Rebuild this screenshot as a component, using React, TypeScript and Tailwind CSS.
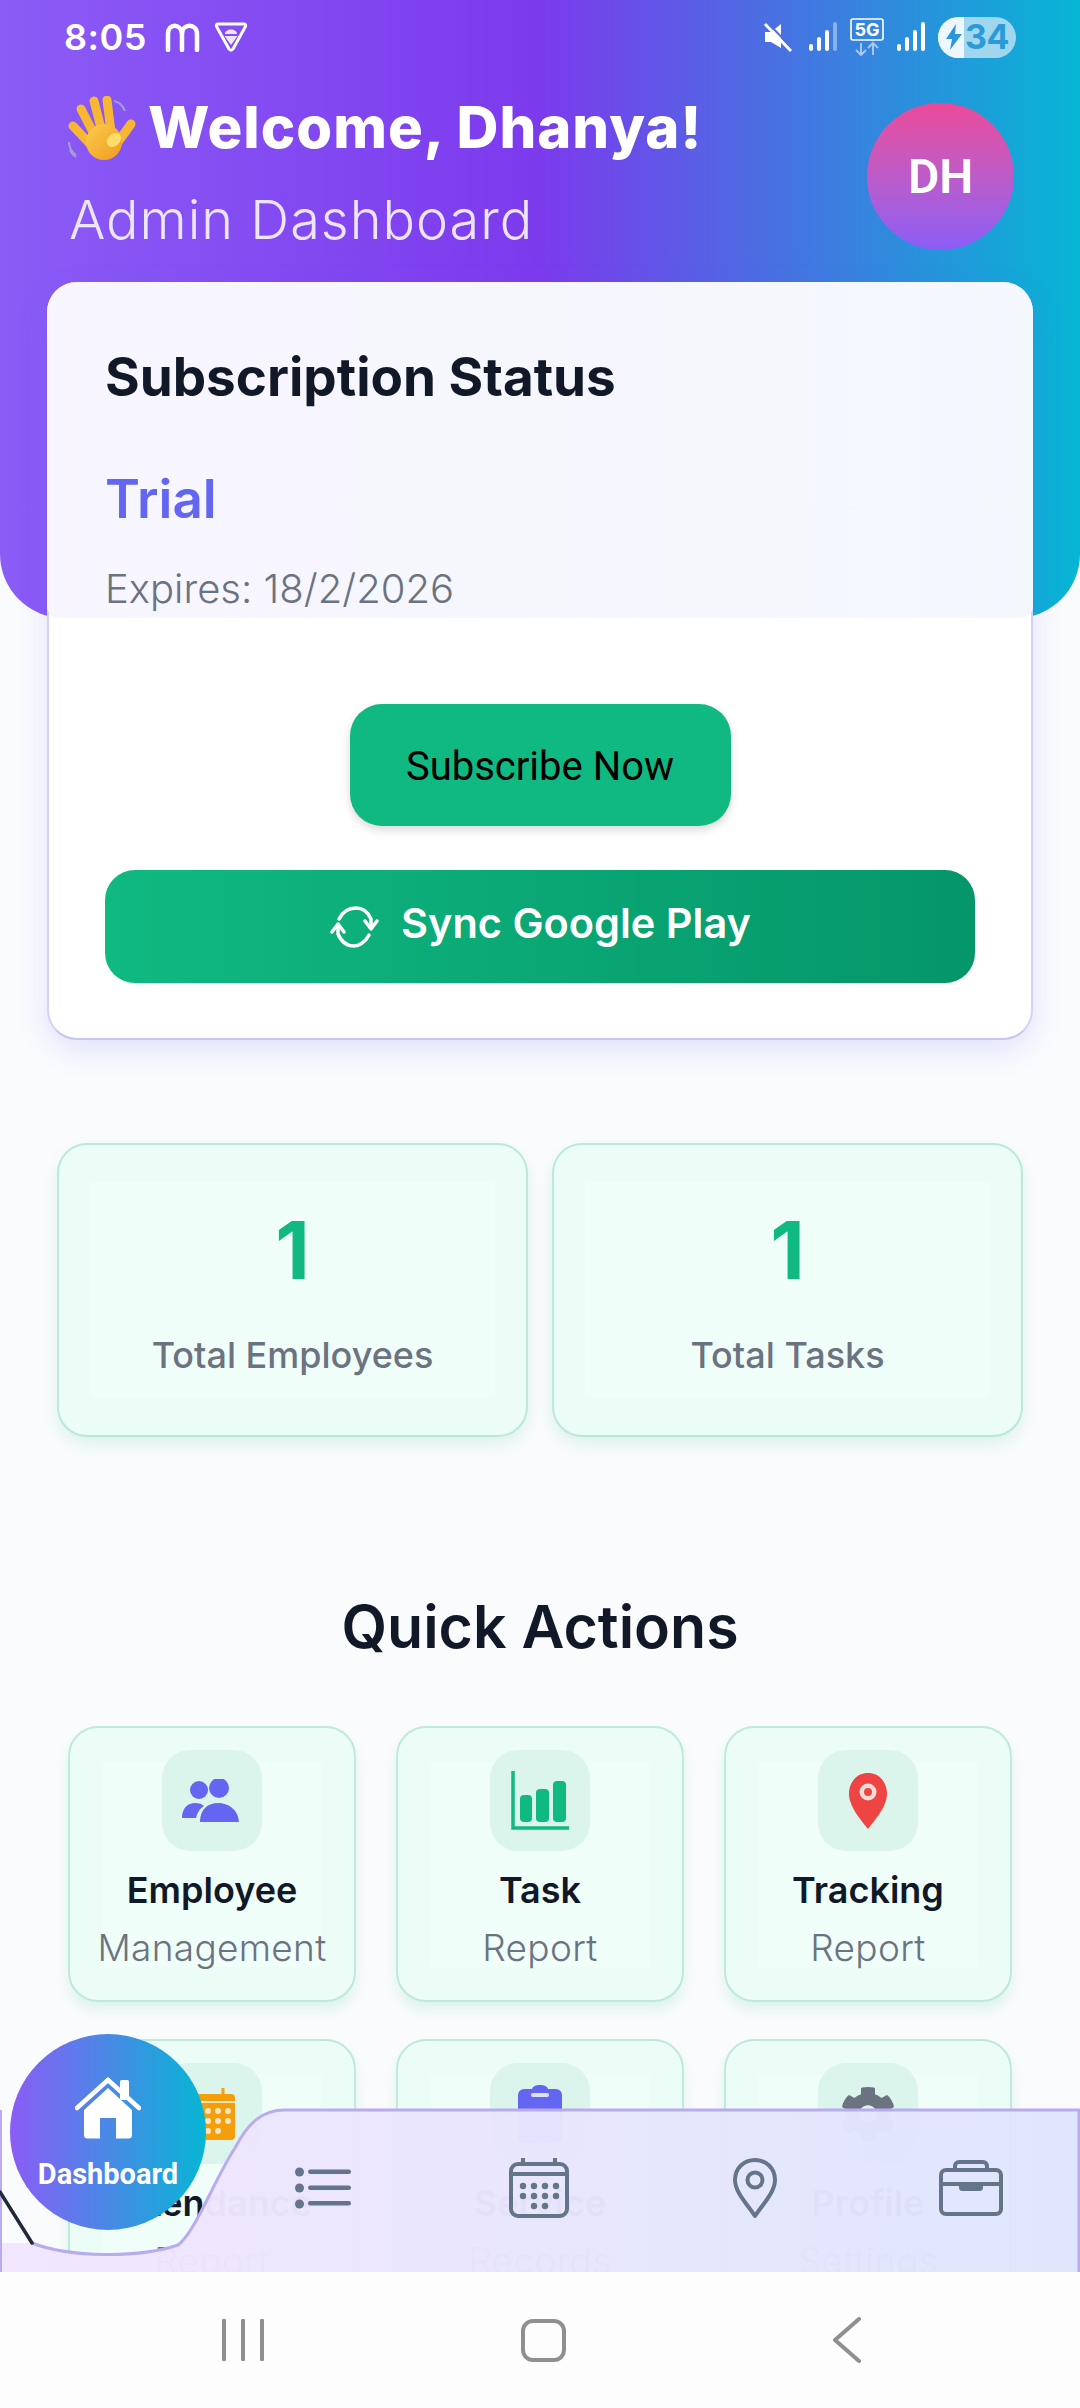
import React from "react";
import { FaCog } from "react-icons/fa";

const Wave = () => (
  <svg width="68" height="66" viewBox="0 0 68 66" className="shrink-0">
    <defs>
      <linearGradient id="h" x1="0" y1="0" x2="1" y2="1">
        <stop offset="0" stopColor="#fbcb50" />
        <stop offset="1" stopColor="#f09c1c" />
      </linearGradient>
    </defs>
    <path d="M46 5c5 1 9 5 11 10M1 46c0 5 3 10 7 13M2 54c1 3 3 5 6 7" fill="none" stroke="#a59bdc" strokeWidth="2" />
    <g fill="none" stroke="#f7b733" strokeWidth="9" strokeLinecap="round">
      <path d="M5 30L22 48" />
      <path d="M13 13L27 40" />
      <path d="M26 5L34 36" />
      <path d="M39 4L43 36" />
      <path d="M63 28L50 46" />
    </g>
    <circle cx="36" cy="46" r="18" fill="url(#h)" />
    <ellipse cx="46" cy="44" rx="8" ry="6" fill="#fddc6c" transform="rotate(-40 46 44)" />
  </svg>
);

const Signal = ({ dim }: { dim?: boolean }) => (
  <svg width="28" height="30" viewBox="0 0 28 30">
    <g fill="#fff">
      <rect x="0" y="22" width="4" height="7" rx="2" />
      <rect x="8" y="15" width="4" height="14" rx="2" />
      <rect x="16" y="8" width="4" height="21" rx="2" />
      <rect x="24" y="0" width="4" height="29" rx="2" opacity={dim ? 0.4 : 1} />
    </g>
  </svg>
);

const StatusBar = () => (
  <div className="flex h-[70px] items-center justify-between pl-[64px] pr-[64px] pt-[4px] text-white">
    <div className="flex items-center">
      <span className="text-[36px] leading-[46px] font-semibold tracking-[0.5px]">8:05</span>
      <svg width="36" height="30" viewBox="0 0 36 30" className="ml-[18px]">
        <path d="M3 28V12c0-11 13-11 14 0v16M17 12c0-11 15-11 15 0v16" fill="none" stroke="#fff" strokeWidth="4.5" strokeLinecap="round" />
      </svg>
      <svg width="34" height="32" viewBox="0 0 34 32" className="ml-[13px]">
        <path d="M4 3h26c1.500 0 2 1 1.500 2.500L19 28c-1 1.500-3 1.500-4 0L2.500 5.500C2 4 2.500 3 4 3z" fill="none" stroke="#fff" strokeWidth="3" />
        <path d="M11 13c0-6 12-6 12 0zM10.500 15h13l-6.500 9z" fill="#fff" opacity=".85" />
      </svg>
    </div>
    <div className="flex items-center">
      <svg width="30" height="30" viewBox="0 0 30 30">
        <path d="M2 10h6l10-8v24l-10-6H2z" fill="#fff" />
        <path d="M2 2l26 27" stroke="#fff" strokeWidth="3" />
        <path d="M4 0l26 27" stroke="#4f6fe0" strokeWidth="2" />
      </svg>
      <div className="ml-[16px]"><Signal dim /></div>
      <svg width="34" height="38" viewBox="0 0 34 38" className="ml-[13px]">
        <rect x="1" y="1" width="32" height="21" rx="2" fill="none" stroke="#fff" strokeWidth="1.600" />
        <text x="17" y="18" textAnchor="middle" fontSize="18" fontWeight="700" fill="#fff" fontFamily="Inter, sans-serif">5G</text>
        <path d="M11 25v12m-5-5l5 5 5-5M23 37V25m-5 5l5-5 5 5" fill="none" stroke="#a9c6f2" strokeWidth="2" />
      </svg>
      <div className="ml-[13px]"><Signal /></div>
      <div className="relative ml-[13px] flex h-[41px] w-[78px] items-center overflow-hidden rounded-full bg-[#a0d7ef]">
        <div className="flex h-full w-[26px] items-center justify-center bg-[#eef7fd] pl-[6px]">
          <svg width="16" height="26" viewBox="0 0 16 26"><path d="M10 0L0 15h6L4 26l12-16H9z" fill="#2a97d8" /></svg>
        </div>
        <span className="ml-[1px] text-[34px] leading-none font-bold tracking-[-0.5px] text-[#2a9ad8]">34</span>
      </div>
    </div>
  </div>
);

const Header = () => (
  <div className="h-[618px] rounded-b-[64px] bg-[linear-gradient(90deg,#8b5cf6,#7c3aed_50%,#06b6d4)]">
    <StatusBar />
    <div className="flex items-start justify-between pl-[68px] pr-[66px] pt-[24px]">
      <div>
        <div className="flex h-[70px] items-center">
          <Wave />
          <span className="ml-[12px] -mt-[5px] text-[58px] leading-[70px] font-extrabold tracking-[1px] whitespace-nowrap text-white">Welcome, Dhanya!</span>
        </div>
        <div className="mt-[26px] ml-[1px] text-[54px] leading-[60px] font-light tracking-[1px] text-[#ede4fe]">Admin Dashboard</div>
      </div>
      <div className="mt-[9px] flex h-[147px] w-[147px] shrink-0 items-center justify-center rounded-full bg-gradient-to-b from-[#ec4899] to-[#8b5cf6] text-[48px] font-semibold text-white" style={{ fontFamily: "Roboto, sans-serif" }}>
        DH
      </div>
    </div>
  </div>
);

const SubCard = () => (
  <div className="relative mx-[47px] -mt-[336px] h-[758px] rounded-[30px] border-2 border-[#d3d3f9] border-b-[#c6c6f3] bg-white px-[56px] pt-[63px] shadow-[0_10px_30px_rgba(99,102,241,0.16)]">
    <div className="absolute -left-[2px] -right-[2px] -top-[2px] h-[336px] rounded-t-[30px] rounded-b-[12px] bg-gradient-to-r from-[#f8f5fe] to-[#f4f8fd]" />
    <div className="relative">
      <div className="text-[53px] leading-[60px] font-bold text-[#111827]">Subscription Status</div>
      <div className="mt-[62px] text-[53px] leading-[60px] font-semibold text-[#6366f1]">Trial</div>
      <div className="mt-[35px] text-[40px] leading-[50px] font-light text-[#6b7280]">Expires: 18/2/2026</div>
      <div className="mt-[90px] flex justify-center">
        <div className="flex h-[122px] w-[381px] items-center justify-center rounded-[32px] bg-[#10b981] pt-[3px] text-[40px] text-black shadow-[0_4px_10px_rgba(0,0,0,0.15)]" style={{ fontFamily: "Roboto, sans-serif" }}>
          Subscribe Now
        </div>
      </div>
      <div className="mt-[44px] flex h-[113px] items-center justify-center rounded-[30px] bg-gradient-to-r from-[#10b981] to-[#059669] pb-[8px]">
        <svg width="50" height="42" viewBox="0 0 50 42" fill="none" stroke="#fff" strokeWidth="3.500" strokeLinecap="round" strokeLinejoin="round" className="mt-[8px]">
          <path d="M10 13C14 5 21 2 27 2c7 0 12 4 15 11v8" />
          <path d="M40 29c-4 8-11 11-15 11-8 0-13-5-16-12v-8" />
          <path d="M3 27l6-8 6 8" transform="translate(0 -1)" />
          <path d="M36 15l6 8 6-8" />
        </svg>
        <span className="ml-[22px] text-[41.5px] leading-[50px] font-semibold text-white">Sync Google Play</span>
      </div>
    </div>
  </div>
);

const Stat = ({ label }: { label: string }) => (
  <div className="flex h-[294px] flex-col items-center rounded-[30px] border-2 border-[#b9e9da] bg-[#ecfcf6] bg-[image:linear-gradient(#f0fef9,#f0fef9)] bg-[length:405px_216px] bg-center bg-no-repeat shadow-[0_8px_16px_rgba(16,185,129,0.12)]">
    <div className="mt-[60px] text-[80px] leading-[90px] font-bold text-[#10b981]">1</div>
    <div className="mt-[38px] text-[36px] leading-[44px] font-medium text-[#6b7280]">{label}</div>
  </div>
);

const People = () => (
  <svg width="60" height="44" viewBox="0 0 60 44" fill="#6366f1">
    <ellipse cx="17" cy="11" rx="9" ry="9" />
    <ellipse cx="37" cy="9" rx="10" ry="10" />
    <path d="M0 39c0-10 6-15 13-15 4 0 7 1 9 3-5 3-7 8-8 12z" />
    <path d="M18 43c0-13 8-19 18-19s20 6 21 19z" />
  </svg>
);
const Bars = () => (
  <svg width="58" height="60" viewBox="0 0 58 60">
    <path d="M2 0v57h56" fill="none" stroke="#10b981" strokeWidth="3.500" />
    <rect x="9" y="24" width="12" height="27" rx="4" fill="#10b981" />
    <rect x="25" y="18" width="13" height="33" rx="4" fill="#10b981" />
    <rect x="42" y="10" width="13" height="41" rx="4" fill="#10b981" />
  </svg>
);
const RedPin = () => (
  <svg width="40" height="56" viewBox="0 0 40 56">
    <path d="M20 0C9 0 1 9 1 21c0 13 13 27 19 35 6-8 19-22 19-35C39 9 31 0 20 0z" fill="#ef4444" />
    <circle cx="20" cy="19" r="8.500" fill="#f5dcd8" />
    <circle cx="20" cy="19" r="4" fill="#ef4444" />
  </svg>
);
const Cal = () => (
  <svg width="46" height="52" viewBox="0 0 46 52">
    <path d="M4 6h38a4 4 0 014 4v38a4 4 0 01-4 4H4a4 4 0 01-4-4V10a4 4 0 014-4z" fill="#f59e0b" />
    <path d="M34 0v8" stroke="#f59e0b" strokeWidth="3" />
    <path d="M0 14h46" stroke="#fbe6bd" strokeWidth="2" />
    <g fill="#fbe6bd">
      <circle cx="19" cy="23" r="3" /><circle cx="29" cy="23" r="3" /><circle cx="39" cy="23" r="3" />
      <circle cx="19" cy="33" r="3" /><circle cx="29" cy="33" r="3" /><circle cx="39" cy="33" r="3" />
      <circle cx="19" cy="43" r="3" /><circle cx="29" cy="43" r="3" />
    </g>
  </svg>
);
const Clip = () => (
  <svg width="44" height="58" viewBox="0 0 44 58">
    <path d="M6 4h8c1-3 4-4 8-4s7 1 8 4h8a6 6 0 016 6v42a6 6 0 01-6 6H6a6 6 0 01-6-6V10a6 6 0 016-6z" fill="#6366f1" />
    <rect x="13" y="8" width="18" height="4" rx="2" fill="#dfe0fb" />
  </svg>
);

const Action = ({ icon, title, sub }: { icon: React.ReactNode; title: string; sub: string }) => (
  <div className="flex h-[276px] flex-col items-center rounded-[30px] border-2 border-[#bdeadb] bg-[#ecfcf6] bg-[image:linear-gradient(#f0fef9,#f0fef9)] bg-[length:220px_205px] bg-center bg-no-repeat pt-[22px] shadow-[0_8px_14px_rgba(16,185,129,0.12)]">
    <div className="flex h-[101px] w-[100px] shrink-0 items-center justify-center rounded-[28px] bg-[#dcf5ec]">{icon}</div>
    <div className="mt-[16px] whitespace-nowrap text-[36px] leading-[46px] font-semibold text-[#111827]">{title}</div>
    <div className="mt-[12px] whitespace-nowrap text-[37px] leading-[46px] font-light tracking-[0.3px] text-[#6b7280]">{sub}</div>
  </div>
);

const BottomBar = () => (
  <div className="absolute left-0 top-[2108px] h-[164px] w-[1080px]">
    <svg width="1080" height="164" viewBox="0 0 1080 164" className="absolute left-0 top-0">
      <defs>
        <linearGradient id="bar" x1="0" y1="0" x2="1" y2="0">
          <stop offset="0" stopColor="#f1e6fe" />
          <stop offset="1" stopColor="#dfe6fc" />
        </linearGradient>
      </defs>
      <path d="M0 164V135H32C70 150 140 150 178 137C195 125 215 70 235 40C248 15 262 2 285 2H1079V164Z" fill="url(#bar)" opacity=".975" />
      <path d="M32 135C70 150 140 150 178 137C195 125 215 70 235 40C248 15 262 2 285 2H1079V164" fill="none" stroke="#baaaf0" strokeWidth="3" />
      <path d="M1 2V164" stroke="#baaaf0" strokeWidth="2" />
      <path d="M0 84L32 135" stroke="#1f2937" strokeWidth="3.500" strokeLinecap="round" />
    </svg>
    <div className="relative flex pl-[215px] pt-[48px]">
      <div className="flex h-[64px] w-[216px] items-center justify-center">
        <svg width="56" height="42" viewBox="0 0 56 42" fill="#64748b">
          <circle cx="4.500" cy="5" r="4.500" /><circle cx="4.500" cy="21" r="4.500" /><circle cx="4.500" cy="37" r="4.500" />
          <rect x="13" y="2.500" width="43" height="4.500" rx="2.200" /><rect x="13" y="18.500" width="43" height="4.500" rx="2.200" /><rect x="13" y="34" width="43" height="4.500" rx="2.200" />
        </svg>
      </div>
      <div className="flex h-[64px] w-[216px] items-center justify-center">
        <svg width="60" height="60" viewBox="0 0 60 60" fill="none">
          <rect x="2" y="6" width="56" height="52" rx="7" stroke="#64748b" strokeWidth="4" />
          <path d="M2 16h56M14 0v8M46 0v8" stroke="#64748b" strokeWidth="4" />
          <g fill="#64748b">
            <circle cx="14" cy="28" r="3.200" /><circle cx="25" cy="28" r="3.200" /><circle cx="36" cy="28" r="3.200" /><circle cx="47" cy="28" r="3.200" />
            <circle cx="14" cy="38" r="3.200" /><circle cx="25" cy="38" r="3.200" /><circle cx="36" cy="38" r="3.200" /><circle cx="47" cy="38" r="3.200" />
            <circle cx="25" cy="48" r="3.200" /><circle cx="36" cy="48" r="3.200" />
          </g>
        </svg>
      </div>
      <div className="flex h-[64px] w-[216px] items-center justify-center">
        <svg width="44" height="60" viewBox="0 0 44 60" fill="none" stroke="#64748b" strokeWidth="4">
          <path d="M22 58C14 46 2 34 2 22 2 10 11 2 22 2s20 8 20 20c0 12-12 24-20 36z" strokeLinejoin="round" />
          <circle cx="22" cy="22" r="7.500" />
        </svg>
      </div>
      <div className="flex h-[64px] w-[216px] items-center justify-center">
        <svg width="64" height="56" viewBox="0 0 64 56" fill="none" stroke="#64748b" strokeWidth="4">
          <rect x="2" y="10" width="60" height="44" rx="5" />
          <path d="M2 24h60M16 10V6a4 4 0 014-4h24a4 4 0 014 4v4" />
          <rect x="22" y="24" width="20" height="5" rx="1.500" fill="#64748b" />
        </svg>
      </div>
    </div>
  </div>
);

const DashboardButton = () => (
  <div className="absolute left-[10px] top-[2034px] flex h-[196px] w-[196px] flex-col items-center rounded-full bg-[linear-gradient(90deg,#8b5cf6,#06b6d4)]" style={{ fontFamily: "Roboto, sans-serif" }}>
    <svg width="66" height="62" viewBox="0 0 66 62" className="mt-[43px]">
      <path d="M33 3L2 31" stroke="#fff" strokeWidth="4.500" strokeLinecap="round" />
      <path d="M33 3l31 28" stroke="#fff" strokeWidth="4.500" strokeLinecap="round" />
      <rect x="45" y="3" width="9" height="20" rx="1.500" fill="#fff" />
      <path d="M33 11L9 33v25a3.500 3.500 0 003.500 3.500H25V41h16v20.500h12.500A3.500 3.500 0 0057 58V33z" fill="#fff" />
    </svg>
    <span className="mt-[18px] text-[29px] leading-[34px] font-bold text-white">Dashboard</span>
  </div>
);

const SystemNav = () => (
  <div className="absolute bottom-0 left-0 flex h-[136px] w-[1080px] items-center bg-[#fdfdfe]">
    <div className="ml-[222px] flex h-[42px] gap-[15px]">
      <div className="h-full w-[4px] rounded-[1px] bg-[#8f8f91]" />
      <div className="h-full w-[4px] rounded-[1px] bg-[#8f8f91]" />
      <div className="h-full w-[4px] rounded-[1px] bg-[#8f8f91]" />
    </div>
    <div className="ml-[257px] h-[43px] w-[45px] rounded-[12px] border-[4px] border-[#8f8f91]" />
    <svg width="30" height="46" viewBox="0 0 30 46" className="ml-[266px]">
      <path d="M27 2L3 23l24 21" fill="none" stroke="#8f8f91" strokeWidth="4" strokeLinecap="round" strokeLinejoin="round" />
    </svg>
  </div>
);

export default function App() {
  return (
    <div className="relative h-[2408px] w-[1080px] overflow-hidden bg-[#fafbfd]" style={{ fontFamily: "Inter, sans-serif" }}>
      <Header />
      <SubCard />
      <div className="mx-[57px] mt-[103px] grid grid-cols-2 gap-[24px]">
        <Stat label="Total Employees" />
        <Stat label="Total Tasks" />
      </div>
      <div className="mt-[156px] text-center text-[59px] leading-[68px] font-semibold text-[#111827]">Quick Actions</div>
      <div className="mx-[68px] mt-[65px] grid grid-cols-3 gap-x-[40px] gap-y-[37px]">
        <Action icon={<People />} title="Employee" sub="Management" />
        <Action icon={<Bars />} title="Task" sub="Report" />
        <Action icon={<RedPin />} title="Tracking" sub="Report" />
        <Action icon={<Cal />} title="Attendance" sub="Report" />
        <Action icon={<Clip />} title="Service" sub="Records" />
        <Action icon={<FaCog className="h-[56px] w-[56px] text-[#6b7280]" />} title="Profile" sub="Settings" />
      </div>
      <BottomBar />
      <DashboardButton />
      <SystemNav />
    </div>
  );
}
